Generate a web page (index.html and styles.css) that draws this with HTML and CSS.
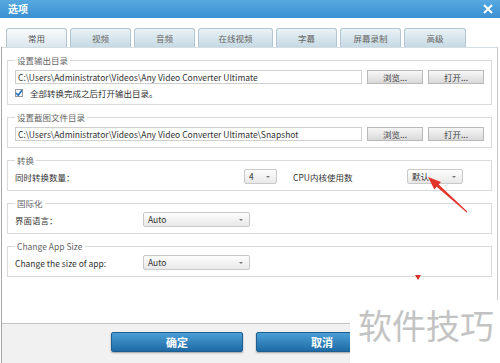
FILE: index.html
```html
<!DOCTYPE html>
<html>
<head>
	<title>选项</title>
	<link rel="stylesheet" href="styles.css">
</head>
<body>
<div class="titlebar">
  <span class="title">选项</span>
  <svg class="close" width="10" height="10" viewBox="0 0 10 10"><path d="M1 1L9 9M9 1L1 9" stroke="#fff" stroke-width="2"/></svg>
</div>
<div class="tabs">
  <div class="tab active">常用</div>
  <div class="tab">视频</div>
  <div class="tab">音频</div>
  <div class="tab wide">在线视频</div>
  <div class="tab">字幕</div>
  <div class="tab">屏幕录制</div>
  <div class="tab last">高级</div>
</div>
<div class="frame">
  <div class="panel">
    <fieldset class="group g1">
      <legend>设置输出目录</legend>
      <div class="path-row">
        <div class="path">C:\Users\Administrator\Videos\Any Video Converter Ultimate</div>
        <div class="btn">浏览...</div>
        <div class="btn">打开...</div>
      </div>
      <div class="check-row">
        <span class="checkbox"><svg width="8" height="8" viewBox="0 0 8 8"><path d="M1 4L3.2 6.3L7 1.2" fill="none" stroke="#1f6fc0" stroke-width="1.6"/></svg></span>
        全部转换完成之后打开输出目录。
      </div>
    </fieldset>
    <fieldset class="group g2">
      <legend>设置截图文件目录</legend>
      <div class="path-row">
        <div class="path">C:\Users\Administrator\Videos\Any Video Converter Ultimate\Snapshot</div>
        <div class="btn">浏览...</div>
        <div class="btn">打开...</div>
      </div>
    </fieldset>
    <fieldset class="group">
      <legend>转换</legend>
      <div class="row">
        <span class="label l-count">同时转换数量：</span>
        <div class="combo c-small">4</div>
        <span class="label l-cpu">CPU内核使用数</span>
        <div class="combo c-mid">默认</div>
      </div>
    </fieldset>
    <fieldset class="group">
      <legend>国际化</legend>
      <div class="row">
        <span class="label l-lang">界面语言：</span>
        <div class="combo c-wide">Auto</div>
      </div>
    </fieldset>
    <fieldset class="group">
      <legend>Change App Size</legend>
      <div class="row">
        <span class="label l-lang">Change the size of app:</span>
        <div class="combo c-wide">Auto</div>
      </div>
    </fieldset>
  </div>
  <div class="footer">
    <div class="primary">确定</div>
    <div class="primary">取消</div>
  </div>
</div>

<!-- annotation overlays from the screenshot -->
<svg class="marks" width="500" height="363" viewBox="0 0 500 363">
  <polygon points="428,177 441,182 438.7,184.6 467.3,211.6 466.7,212.4 436.7,186.8 434.3,189.4" fill="#e3342c"/>
  <polygon points="415,275 421,275 418,280" fill="#d9302a"/>
</svg>
<div class="watermark">软件技巧</div>
</body>
</html>
```

FILE: styles.css
```css
html, body {
  margin: 0;
  padding: 0;
}
* {
  box-sizing: border-box;
}
body {
  width: 500px;
  height: 363px;
  overflow: hidden;
  position: relative;
  background: #fff;
  font-family: "Noto Sans CJK SC", "Noto Sans", sans-serif;
  font-size: 8.5px;
  line-height: 12px;
  color: #333;
}

/* title */
.titlebar {
  height: 18px;
  display: flex;
  align-items: center;
  justify-content: space-between;
  padding: 0 8px;
  background: linear-gradient(#56a9e0, #3990d2);
  color: #fff;
}
.title {
  font-size: 10px;
  font-weight: bold;
}
.close {
  margin-right: -1px;
}

/* tabs */
.tabs {
  display: flex;
  gap: 3px;
  height: 29px;
  padding: 10px 0 0 6px;
}
.tab {
  width: 61px;
  height: 19px;
  border: 1px solid #b2c6d1;
  border-bottom: none;
  border-radius: 3px 3px 0 0;
  background: linear-gradient(#e9f2f6, #c6d9e3);
  color: #666;
  text-align: center;
  line-height: 18px;
}
.tab.active {
  background: linear-gradient(#f9fbfc, #dbe6ec);
  color: #555;
}
.tab.wide {
  width: 75px;
}
.tab.last {
  width: 62px;
}

/* frame */
.frame {
  margin: 0 2px 0 1px;
  border-left: 1px solid #a6a6a6;
  border-right: 1px solid #cccccc;
}
.panel {
  height: 276px;
  border-top: 1px solid #d3dde2;
  padding-top: 6px;
}
.group {
  width: 485px;
  margin: 0 0 6px 5px;
  padding: 3px 7px 6px 7px;
  border: 1px solid #dadada;
  min-width: 0;
}
.group legend {
  padding: 0 2px;
  color: #666;
  line-height: 12px;
}
.g1 {
  padding-top: 4px;
  padding-bottom: 5px;
}
.g2 {
  padding-top: 4px;
}

.path-row {
  display: flex;
  height: 14px;
}
.path {
  width: 347px;
  height: 14px;
  border: 1px solid #cfcfcf;
  padding-left: 2px;
  line-height: 12px;
  white-space: nowrap;
  overflow: hidden;
}
.btn {
  width: 56px;
  height: 14px;
  margin-left: 5px;
  border: 1px solid #b9b9b9;
  background: linear-gradient(#f7f7f7, #d9d9d9);
  text-align: center;
  line-height: 12px;
  color: #444;
}
.check-row {
  display: flex;
  align-items: center;
  height: 12px;
  margin-top: 3px;
}
.checkbox {
  width: 8px;
  height: 8px;
  border: 1px solid #9a9a9a;
  margin-right: 7px;
  display: flex;
  align-items: center;
  justify-content: center;
  background: #fff;
}
.checkbox svg {
  flex: none;
}

.row {
  display: flex;
  align-items: center;
  height: 15px;
}
.label {
  flex: none;
}
.l-count {
  width: 229px;
}
.l-cpu {
  width: 114px;
  margin-left: 16px;
}
.l-lang {
  width: 128px;
}
.combo {
  position: relative;
  height: 15px;
  border: 1px solid #c9c9c9;
  border-radius: 2px;
  background: linear-gradient(#fdfdfd, #e8e8e8);
  padding-left: 4px;
  line-height: 13px;
}
.combo::after {
  content: "";
  position: absolute;
  right: 6px;
  top: 6px;
  border-left: 2px solid transparent;
  border-right: 2px solid transparent;
  border-top: 2px solid #777;
}
.c-small {
  width: 33px;
}
.c-mid {
  width: 56px;
}
.c-wide {
  width: 107px;
}

/* footer */
.footer {
  height: 40px;
  border-top: 1px solid #c4c4c4;
  background: #f1f1f1;
  display: flex;
  justify-content: center;
  gap: 13px;
  padding-top: 8px;
}
.primary {
  width: 132px;
  height: 20px;
  border: 1px solid #1d5f93;
  border-radius: 2px;
  background: linear-gradient(#4b9fd6, #1e6aa4);
  box-shadow: 0 1px 2px rgba(0, 0, 0, 0.35);
  color: #fff;
  font-size: 11px;
  font-weight: bold;
  text-align: center;
  line-height: 18px;
}

/* overlays */
.marks {
  position: absolute;
  left: 0;
  top: 0;
  pointer-events: none;
}
.watermark {
  position: absolute;
  left: 350px;
  top: 300px;
  width: 150px;
  height: 63px;
  background: #fff;
  padding: 4px 0 0 8px;
  font-size: 34px;
  line-height: 42px;
  color: #c3c3c3;
}
```
